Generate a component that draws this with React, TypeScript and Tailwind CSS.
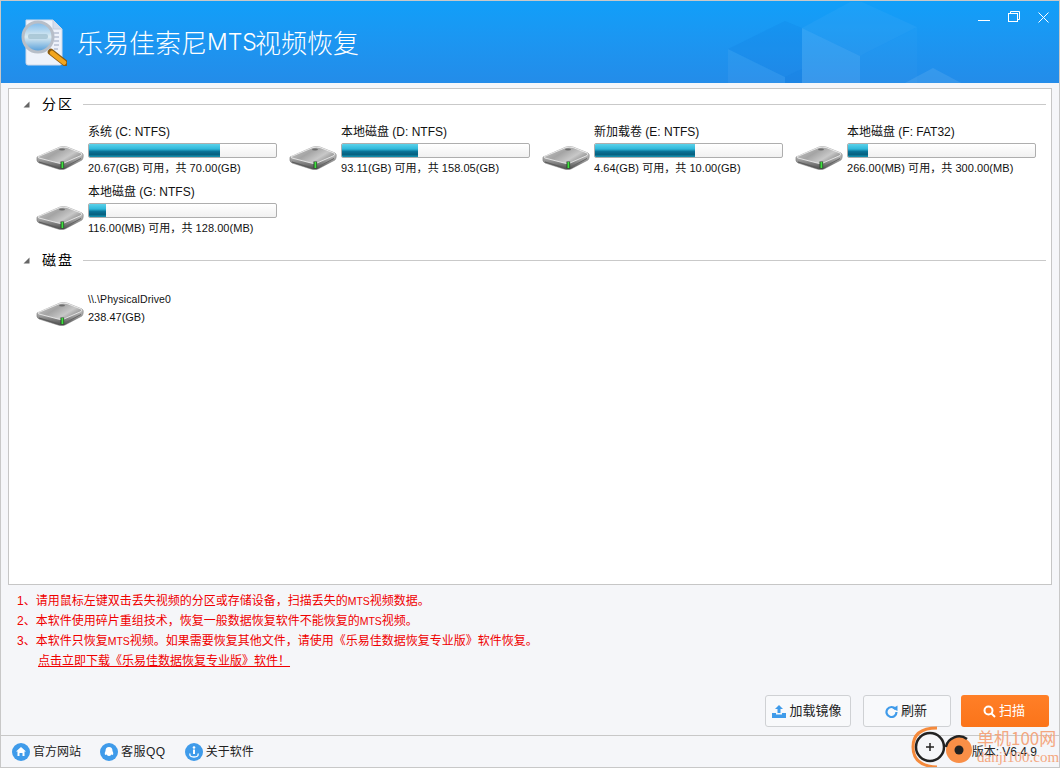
import React from "react";

const CJK = '"Liberation Sans","Noto Sans CJK SC",sans-serif';

function Drive() {
  return (
    <svg width="48" height="24" viewBox="0 0 48 24" className="shrink-0">
      <defs>
        <linearGradient id="dTop" x1="0" y1="0" x2="1" y2="0.6">
          <stop offset="0" stopColor="#c9c9c9" />
          <stop offset="0.45" stopColor="#a4a4a4" />
          <stop offset="0.75" stopColor="#c8c8c8" />
          <stop offset="1" stopColor="#8d8d8d" />
        </linearGradient>
        <linearGradient id="dSide" x1="0" y1="0" x2="0" y2="1">
          <stop offset="0" stopColor="#e8e8e8" />
          <stop offset="0.6" stopColor="#9a9a9a" />
          <stop offset="1" stopColor="#4a4a4a" />
        </linearGradient>
      </defs>
      <path d="M1 11 L24 1 Q27 0 31 1 L46 7 Q48 8 47 12 L46 14 L29 23 Q26 24 22 23 L3 17 Q0 16 1 11 Z" fill="url(#dSide)" stroke="#7a7a7a" strokeWidth="0.5" />
      <path d="M2.5 10.5 L24 1.5 Q27 0.8 31 1.5 L45 7 Q46.5 8 45 9.5 L28 17 Q25 18 22 17 L3 12 Q1.5 11.5 2.5 10.5 Z" fill="url(#dTop)" stroke="#f3f3f3" strokeWidth="0.8" />
      <ellipse cx="26" cy="3.5" rx="3" ry="1.1" fill="#6d6d6d" />
      <path d="M3 16 L21 21.5" stroke="#5a5a5a" strokeWidth="1" />
      <path d="M30 20.5 L45 12.5" stroke="#666" strokeWidth="1" />
      <rect x="24.5" y="15.5" width="3.6" height="7" fill="#2c4a2c" />
      <rect x="25.5" y="16" width="1.8" height="6" fill="#3fe23f" />
    </svg>
  );
}

function Tri() {
  return (
    <svg width="7" height="7" viewBox="0 0 7 7" className="shrink-0">
      <path d="M6.5 0.5 V6.5 H0.5 Z" fill="#666" />
    </svg>
  );
}

function Section({ title }: { title: string }) {
  return (
    <div className="flex items-center h-[16px] pl-[14px] pr-[5px]">
      <Tri />
      <span className="ml-[12px] w-[41px] text-[14px] tracking-[2px] text-black leading-[16px]">{title}</span>
      <div className="flex-1 h-px bg-[#c9c9c9]" />
    </div>
  );
}

const drives = [
  { n: "系统 (C: NTFS)", s: "20.67(GB) 可用，共 70.00(GB)", w: "w-[131px]" },
  { n: "本地磁盘 (D: NTFS)", s: "93.11(GB) 可用，共 158.05(GB)", w: "w-[76px]" },
  { n: "新加载卷 (E: NTFS)", s: "4.64(GB) 可用，共 10.00(GB)", w: "w-[100px]" },
  { n: "本地磁盘 (F: FAT32)", s: "266.00(MB) 可用，共 300.00(MB)", w: "w-[20px]" },
  { n: "本地磁盘 (G: NTFS)", s: "116.00(MB) 可用，共 128.00(MB)", w: "w-[17px]" },
];

function DriveItem({ d }: { d: (typeof drives)[number] }) {
  return (
    <div className="flex items-end h-[60px] w-[253px]">
      <div className="mb-[6px] mr-[4px]"><Drive /></div>
      <div className="w-[189px] flex flex-col">
        <div className="text-[12px] leading-[16px] text-[#111] whitespace-nowrap">{d.n}</div>
        <div className="mt-[3px] h-[15px] border border-[#aeaeae] rounded-[2px] bg-gradient-to-b from-white to-[#f1f1f1] overflow-hidden">
          <div className={`h-full ${d.w} bg-[linear-gradient(to_bottom,#5bd2ea_0%,#2fb8da_38%,#0a7397_58%,#07607f_80%,#1796b5_100%)]`} />
        </div>
        <div className="mt-[2px] text-[11px] tracking-[0.05px] leading-[16px] text-[#111] whitespace-nowrap">{d.s}</div>
      </div>
    </div>
  );
}

function Btn({ children, w, primary }: { children: React.ReactNode; w: string; primary?: boolean }) {
  return (
    <div
      className={`${w} h-[32px] flex items-center justify-center gap-[3px] pr-[2px] rounded-[3px] text-[13px] ${
        primary
          ? "bg-gradient-to-b from-[#ff7f27] to-[#fb7419] text-white"
          : "border border-[#cfd1d4] bg-[#f8f9fb] text-[#222]"
      }`}
    >
      {children}
    </div>
  );
}

function Round({ children }: { children: React.ReactNode }) {
  return (
    <svg width="18" height="18" viewBox="0 0 18 18">
      <circle cx="9" cy="9" r="9" fill="#3f9bea" />
      {children}
    </svg>
  );
}

export default function App() {
  return (
    <div
      className="relative w-[1060px] h-[768px] overflow-hidden bg-[#f5f6f9] flex flex-col border-b border-l border-r border-[#c8c8c8]"
      style={{ fontFamily: CJK }}
    >
      {/* title bar */}
      <header className="relative h-[83px] shrink-0 border-t border-[#c8c8c8] bg-gradient-to-b from-[#109ff9] to-[#238ce9] flex items-center pl-[20px] overflow-hidden">
        <svg className="absolute left-[719px] top-0" width="250" height="83" viewBox="720 0 250 83">
          <path d="M728 48 L785 20 L802 27 V68 L785 76 Z" fill="#0a6fd8" opacity="0.12" />
          <path d="M785 76 L802 68 V83 H785 Z" fill="#0a6fd8" opacity="0.25" />
          <path d="M728 48 L785 76 V83 H728 Z" fill="#fff" opacity="0.05" />
          <path d="M802 27 L850 1 H862 L917 26 L860 55 Z" fill="#fff" opacity="0.04" />
          <path d="M802 27 L860 55 V83 H802 Z" fill="#fff" opacity="0.1" />
          <path d="M860 55 L917 26 V83 H860 Z" fill="#fff" opacity="0.02" />
          <path d="M903 83 L933 67 L963 83 Z" fill="#fff" opacity="0.09" />
        </svg>
        <svg width="46" height="48" viewBox="0 0 46 48" className="relative shrink-0">
          <defs>
            <linearGradient id="lens" x1="0" y1="0" x2="0" y2="1">
              <stop offset="0" stopColor="#7db9ea" />
              <stop offset="0.5" stopColor="#dcecf2" />
              <stop offset="1" stopColor="#4f9ad8" />
            </linearGradient>
          </defs>
          <path d="M5 2 H32 L41 11 V45 Q41 47 39 47 H7 Q5 47 5 45 Z" fill="#eef2fa" stroke="#cfd8e8" />
          <path d="M32 2 V11 H41" fill="#d5ddec" stroke="#c5cfe0" />
          <path d="M31 15 H38 M32 19 H38 M33 23 H38 M33 27 H38 M33 31 H37" stroke="#9aa6bd" strokeWidth="1.2" />
          <path d="M30 34 L44 45" stroke="#8a5a10" strokeWidth="6.5" strokeLinecap="round" />
          <path d="M31 35 L43 44.5" stroke="#f2a51e" strokeWidth="4.5" strokeLinecap="round" />
          <circle cx="17" cy="19" r="15" fill="url(#lens)" stroke="#b7bec8" strokeWidth="3" />
          <rect x="7" y="16" width="20" height="5" rx="2" fill="#a3c2d2" opacity="0.8" />
        </svg>
        <div className="relative ml-[10px] flex items-center text-white text-[26px] font-light leading-none" style={{ fontFamily: '"Noto Sans CJK SC",sans-serif' }}>
          乐易佳索尼<span className="text-[23px] w-[48px] whitespace-nowrap" style={{ fontFamily: '"Inter",sans-serif', fontWeight: 300 }}>MTS</span>视频恢复
        </div>
        <div className="absolute right-[10px] top-[10px] flex items-center gap-[18px]">
          <svg width="12" height="12" viewBox="0 0 12 12"><path d="M0 9.5 H12" stroke="#fff" /></svg>
          <svg width="12" height="12" viewBox="0 0 12 12" fill="none" stroke="#fff"><rect x="0.5" y="2.5" width="9" height="8" /><path d="M2.5 2.5 V0.5 H11.5 V8.5 H9.5" /></svg>
          <svg width="11" height="11" viewBox="0 0 11 11"><path d="M0.5 0.5 L10.5 10.5 M10.5 0.5 L0.5 10.5" stroke="#fff" /></svg>
        </div>
      </header>

      {/* drive panel */}
      <main className="mt-[5px] mx-[7px] h-[497px] shrink-0 border border-[#c6c6c6] bg-white pt-[7px]">
        <Section title="分区" />
        <div className="mt-[4px] pl-[27px] flex flex-wrap">
          {drives.map((d) => (
            <DriveItem key={d.n} d={d} />
          ))}
        </div>
        <div className="mt-[16px]"><Section title="磁盘" /></div>
        <div className="mt-[20px] pl-[27px] flex items-start">
          <div className="mt-[14px] mr-[4px]"><Drive /></div>
          <div className="flex flex-col pt-[2px]">
            <div className="text-[10.5px] tracking-[0.1px] leading-[18px] text-[#111] whitespace-nowrap">\\.\PhysicalDrive0</div>
            <div className="text-[11px] leading-[18px] text-[#111]">238.47(GB)</div>
          </div>
        </div>
      </main>

      {/* notes */}
      <section className="mt-[6px] pl-[16px] text-[12px] text-[#f00000] leading-[20px] shrink-0">
        <p>1、请用鼠标左键双击丢失视频的分区或存储设备，扫描丢失的<span className="text-[10.5px]">MTS</span>视频数据。</p>
        <p>2、本软件使用碎片重组技术，恢复一般数据恢复软件不能恢复的<span className="text-[10.5px]">MTS</span>视频。</p>
        <p>3、本软件只恢复<span className="text-[10.5px]">MTS</span>视频。如果需要恢复其他文件，请使用《乐易佳数据恢复专业版》软件恢复。</p>
        <p className="pl-[21px] underline leading-[21px]">点击立即下载《乐易佳数据恢复专业版》软件！</p>
      </section>

      {/* actions */}
      <div className="mt-[23px] pr-[10px] flex justify-end gap-[12px] shrink-0">
        <Btn w="w-[86px]">
          <svg width="14" height="13" viewBox="0 0 14 13" fill="#3f9bea">
            <path d="M7 0 L11 4 H8.5 V8 H5.5 V4 H3 Z" />
            <path d="M0 8 H4 V9.5 H10 V8 H14 V13 H0 Z" />
          </svg>
          加载镜像
        </Btn>
        <Btn w="w-[88px]">
          <svg width="13" height="13" viewBox="0 0 13 13" fill="none">
            <path d="M10.5 4 A5 5 0 1 0 11.5 7" stroke="#3f9bea" strokeWidth="2.2" />
            <path d="M7.5 3.5 L12.5 0.5 V6 Z" fill="#3f9bea" />
          </svg>
          刷新
        </Btn>
        <div className="ml-[-2px]">
          <Btn w="w-[88px]" primary>
            <svg width="13" height="13" viewBox="0 0 13 13" fill="none" stroke="#fff" strokeWidth="2">
              <circle cx="5.5" cy="5.5" r="4" />
              <path d="M8.5 8.5 L12 12" />
            </svg>
            扫描
          </Btn>
        </div>
      </div>

      {/* footer */}
      <footer className="mt-[8px] flex-1 border-t border-[#c8c8c8] flex items-center pl-[11px] text-[12px] text-[#222]">
        <div className="flex items-center gap-[3px]">
          <Round><path d="M9 4 L14 8.5 H12.5 V13 H10.5 V10 H7.5 V13 H5.5 V8.5 H4 Z" fill="#fff" /></Round>
          官方网站
        </div>
        <div className="ml-[19px] flex items-center gap-[3px]">
          <Round><path d="M9 4 Q12.5 4 12.5 8 Q14 10.5 13 12 L11.5 11.5 Q9 14.5 6.5 11.5 L5 12 Q4 10.5 5.5 8 Q5.5 4 9 4 Z" fill="#fff" /></Round>
          <span className="tracking-[0.5px]">客服QQ</span>
        </div>
        <div className="ml-[19px] flex items-center gap-[3px]">
          <Round>
            <circle cx="9" cy="4.5" r="1.3" fill="#fff" />
            <path d="M8 6.5 H10 V11 H8 Z" fill="#fff" />
            <path d="M5 10.5 Q4 14 9 14 Q14 14 13 10.5" fill="none" stroke="#fff" strokeWidth="1.3" />
          </Round>
          关于软件
        </div>
        <div className="ml-auto mr-[22px] text-[12px] text-[#222]">版本: V6.4.9</div>
      </footer>

      {/* watermark over the corner */}
      <div className="absolute left-[910px] top-[725px] w-[150px] h-[43px] pointer-events-none">
        <svg className="absolute left-0 top-0" width="72" height="43" viewBox="0 0 72 43" fill="none">
          <path d="M26 3 Q2 3 2 22 Q2 41 26 42" stroke="#f58a3c" strokeWidth="3" />
          <circle cx="19" cy="22" r="14" fill="#f5f6f9" stroke="#222" strokeWidth="2.5" />
          <path d="M15 22 H23 M19 18 V26" stroke="#222" strokeWidth="1.5" />
          <circle cx="48" cy="25" r="13" fill="#f98f47" />
          <path d="M34.8 22 A13.5 13.5 0 0 1 56 14.1" stroke="#222" strokeWidth="2.5" />
          <circle cx="48" cy="25" r="4.5" fill="#222" />
        </svg>
        <div className="absolute left-[66px] top-[3px] text-[17px] leading-[20px] text-[#f4a77f] whitespace-nowrap" style={{ fontFamily: '"Noto Sans CJK SC",sans-serif' }}>单机100网</div>
        <div className="absolute left-[66px] top-[24px] text-[15px] leading-[16px] text-[#f4a77f] whitespace-nowrap" style={{ fontFamily: '"Liberation Serif",serif' }}>danji100.com</div>
      </div>
    </div>
  );
}
